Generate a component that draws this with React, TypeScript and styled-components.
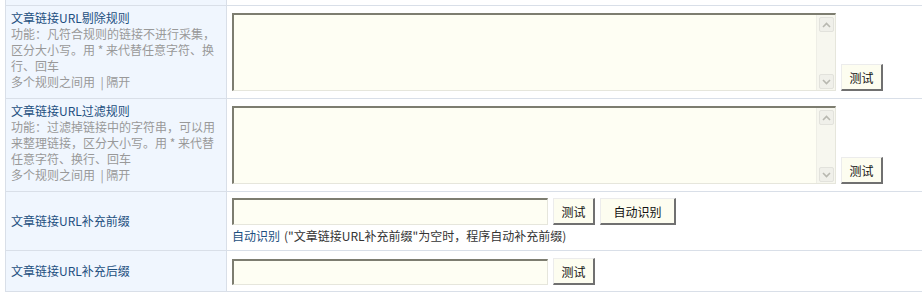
import React from 'react'
import styled, { createGlobalStyle } from 'styled-components'

const GlobalStyle = createGlobalStyle`
    body {
        margin: 0;
        background: #fff;
        font-family: "Noto Sans CJK SC", "DejaVu Sans", sans-serif;
        font-size: 12px;
        color: #333;
    }
`

const Table = styled.div`
    margin-left: 5px;
    border-left: 1px solid #d9dfe8;
    border-bottom: 1px solid #d9dfe8;
`

const Row = styled.div<{ $stub?: boolean }>`
    display: grid;
    grid-template-columns: 221px 1fr;
    border-top: ${p => (p.$stub ? 'none' : '1px solid #d9dfe8')};
    height: ${p => (p.$stub ? '5px' : 'auto')};
`

const Label = styled.div<{ $middle?: boolean }>`
    background: #f0f6fe;
    border-right: 1px solid #d9dfe8;
    padding: ${p => (p.$middle ? '0 5px' : '4px 5px 0')};
    display: flex;
    flex-direction: column;
    justify-content: ${p => (p.$middle ? 'center' : 'flex-start')};
    line-height: 16px;
`

const Title = styled.div`
    color: #1d4f80;
`

const Hint = styled.div`
    color: #999;
`

const Field = styled.div<{ $pad: string }>`
    padding: ${p => p.$pad};
    padding-left: 5px;
    display: flex;
    flex-direction: column;
`

const Line = styled.div<{ $align?: string }>`
    display: flex;
    align-items: ${p => p.$align || 'center'};
    gap: 5px;
`

const AreaBox = styled.div`
    width: 604px;
    height: 78px;
    box-sizing: border-box;
    display: flex;
    background: #fefef3;
    border-top: 2px solid #7d7d70;
    border-left: 2px solid #7d7d70;
    border-right: 1px solid #e6e6dc;
    border-bottom: 1px solid #e6e6dc;
`

const Area = styled.textarea`
    flex: 1;
    border: none;
    outline: none;
    resize: none;
    background: transparent;
    font: inherit;
    padding: 2px;
`

const Scroll = styled.div`
    width: 18px;
    display: flex;
    flex-direction: column;
    justify-content: space-between;
    align-items: center;
    padding: 2px 0 1px;
    background: #f7f7ef;
    border-left: 1px solid #eeeee6;
`

const ScrollBtn = styled.div`
    width: 15px;
    height: 15px;
    box-sizing: border-box;
    border: 1px solid #e2e2dc;
    border-radius: 2px;
    background: #f0f0ea;
    display: flex;
    align-items: center;
    justify-content: center;
`

const Input = styled.input<{ $h: number }>`
    width: 316px;
    height: ${p => p.$h}px;
    box-sizing: border-box;
    background: #fefef3;
    border-top: 2px solid #7d7d70;
    border-left: 2px solid #7d7d70;
    border-right: 1px solid #e6e6dc;
    border-bottom: 1px solid #e6e6dc;
    outline: none;
    margin: 0;
`

const Button = styled.button<{ $w: number }>`
    width: ${p => p.$w}px;
    height: 27px;
    box-sizing: border-box;
    margin: 0;
    padding: 0;
    background: #fdfdf0;
    border-top: 1px solid #ececec;
    border-left: 1px solid #ececec;
    border-right: 2px solid #707070;
    border-bottom: 2px solid #707070;
    font-family: inherit;
    font-size: 12px;
    color: #111;
`

const Note = styled.div`
    margin-top: 3px;
    line-height: 16px;
    color: #333;
    a {
        color: #1d4f80;
        text-decoration: none;
        margin-right: 4px;
    }
`

const Chevron: React.FC<{ up?: boolean }> = ({ up }) => (
    <svg width="9" height="6" viewBox="0 0 9 6">
        <path d={up ? 'M1 5 L4.5 1.5 L8 5' : 'M1 1 L4.5 4.5 L8 1'} stroke="#b8b8b0" strokeWidth="1.6" fill="none" />
    </svg>
)

const RuleArea: React.FC = () => (
    <Line $align="flex-end">
        <AreaBox>
            <Area />
            <Scroll>
                <ScrollBtn><Chevron up /></ScrollBtn>
                <ScrollBtn><Chevron /></ScrollBtn>
            </Scroll>
        </AreaBox>
        <Button $w={42}>测试</Button>
    </Line>
)

const App: React.FC = () => (
    <>
        <GlobalStyle />
        <Table>
            <Row $stub>
                <Label />
                <div />
            </Row>
            <Row>
                <Label>
                    <Title>文章链接URL剔除规则</Title>
                    <Hint>
                        功能：凡符合规则的链接不进行采集，<br />
                        区分大小写。用 * 来代替任意字符、换<br />
                        行、回车<br />
                        多个规则之间用 &nbsp;| 隔开
                    </Hint>
                </Label>
                <Field $pad="7px 0 7px">
                    <RuleArea />
                </Field>
            </Row>
            <Row>
                <Label>
                    <Title>文章链接URL过滤规则</Title>
                    <Hint>
                        功能：过滤掉链接中的字符串，可以用<br />
                        来整理链接，区分大小写。用 * 来代替<br />
                        任意字符、换行、回车<br />
                        多个规则之间用 &nbsp;| 隔开
                    </Hint>
                </Label>
                <Field $pad="7px 0 7px">
                    <RuleArea />
                </Field>
            </Row>
            <Row>
                <Label $middle>
                    <Title>文章链接URL补充前缀</Title>
                </Label>
                <Field $pad="6px 0 6px">
                    <Line>
                        <Input $h={27} />
                        <Button $w={42}>测试</Button>
                        <Button $w={76}>自动识别</Button>
                    </Line>
                    <Note>
                        <a href="#">自动识别</a>("文章链接URL补充前缀"为空时，程序自动补充前缀)
                    </Note>
                </Field>
            </Row>
            <Row>
                <Label $middle>
                    <Title>文章链接URL补充后缀</Title>
                </Label>
                <Field $pad="7px 0 6px">
                    <Line>
                        <Input $h={26} />
                        <Button $w={42}>测试</Button>
                    </Line>
                </Field>
            </Row>
        </Table>
    </>
)

export default App
